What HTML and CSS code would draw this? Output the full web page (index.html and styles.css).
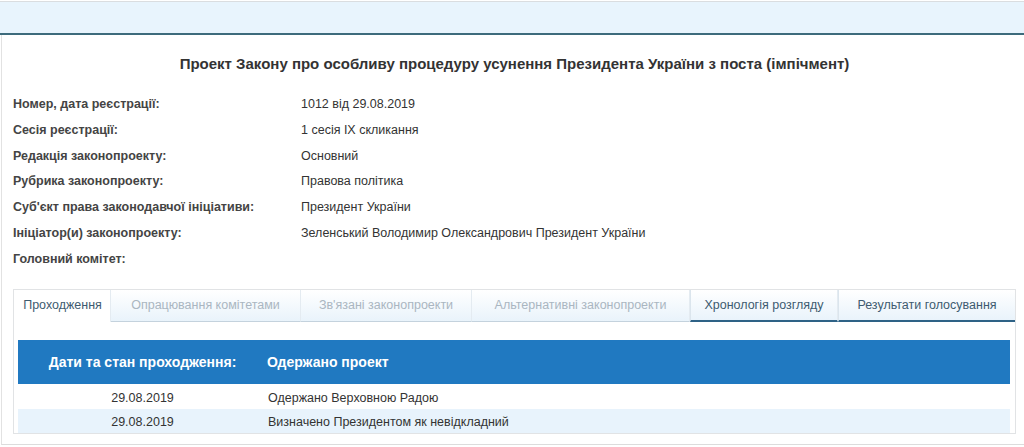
FILE: index.html
```html
<!DOCTYPE html>
<html lang="uk">
<head>
<meta charset="utf-8">
<title>Проект Закону</title>
<link rel="stylesheet" href="styles.css">
</head>
<body>
<div class="topbar"></div>
<div class="page">
  <h1 class="title">Проект Закону про особливу процедуру усунення Президента України з поста (імпічмент)</h1>
  <div class="info">
    <div class="label">Номер, дата реєстрації:</div><div class="value">1012 від 29.08.2019</div>
    <div class="label">Сесія реєстрації:</div><div class="value">1 сесія IX скликання</div>
    <div class="label">Редакція законопроекту:</div><div class="value">Основний</div>
    <div class="label">Рубрика законопроекту:</div><div class="value">Правова політика</div>
    <div class="label">Суб'єкт права законодавчої ініціативи:</div><div class="value">Президент України</div>
    <div class="label">Ініціатор(и) законопроекту:</div><div class="value">Зеленський Володимир Олександрович Президент України</div>
    <div class="label">Головний комітет:</div><div class="value"></div>
  </div>
  <div class="tabbox">
    <div class="tabs">
      <div class="tab active">Проходження</div>
      <div class="tab disabled">Опрацювання комітетами</div>
      <div class="tab disabled">Зв'язані законопроекти</div>
      <div class="tab disabled">Альтернативні законопроекти</div>
      <div class="tab enabled">Хронологія розгляду</div>
      <div class="tab enabled last">Результати голосування</div>
    </div>
    <div class="panel">
      <div class="thead">
        <div class="c1">Дати та стан проходження:</div>
        <div class="c2">Одержано проект</div>
      </div>
      <div class="row">
        <div class="c1">29.08.2019</div>
        <div class="c2">Одержано Верховною Радою</div>
      </div>
      <div class="row alt">
        <div class="c1">29.08.2019</div>
        <div class="c2">Визначено Президентом як невідкладний</div>
      </div>
    </div>
  </div>
</div>
</body>
</html>
```
FILE: styles.css
```css
html, body {
  margin: 0;
  padding: 0;
  background: #fff;
  font-family: "Liberation Sans", Arial, sans-serif;
  color: #333;
}
.topbar {
  margin-top: 1px;
  height: 31px;
  background: #e8f4fd;
  border-top: 1px solid #dadde0;
  border-bottom: 2px solid #3d6b7c;
}
.page {
  margin-left: 1px;
  border-left: 1px solid #e2e2e2;
  border-bottom: 1px solid #dcdcdc;
  height: 410px;
  box-sizing: border-box;
  padding: 0 8px 0 11px;
}
.title {
  margin: 0;
  padding-top: 20px;
  height: 39px;
  font-size: 15px;
  font-weight: bold;
  text-align: center;
  color: #333;
  line-height: 18px;
}
.info {
  display: grid;
  grid-template-columns: 288px 1fr;
  grid-auto-rows: 25.8px;
  font-size: 12.5px;
  line-height: 16px;
  margin-top: 2px;
}
.label {
  font-weight: bold;
  color: #444;
  font-size: 12.5px;
}
.value {
  color: #333;
}
.tabbox {
  margin-top: 12px;
  border: 1px solid #e1e3e5;
  width: 1003px;
  box-sizing: border-box;
}
.tabs {
  display: grid;
  grid-template-columns: 97px 190px 171px 218px 148px 1fr;
  height: 32px;
}
.tab {
  font-size: 12.5px;
  text-align: center;
  line-height: 30px;
  box-sizing: border-box;
  background: linear-gradient(#ffffff, #e9f3fb);
  border-right: 1px solid #e4ebf1;
  border-bottom: 1px solid #c4d2dd;
  color: #aab6c1;
}
.tab.active {
  background: #fff;
  border-bottom: none;
  color: #3e5b70;
  padding-left: 1px;
}
.tab.enabled {
  color: #3e5b70;
  border-bottom: 2px solid #2e6286;
  border-left: 1px solid #dbe5ed;
}
.tab.last {
  border-right: none;
}
.panel {
  padding: 18px 5px 0 4px;
}
.thead {
  display: flex;
  align-items: center;
  height: 44px;
  margin-bottom: 1px;
  background: #2079c1;
  color: #fff;
  font-size: 14px;
  font-weight: bold;
}
.c1 {
  width: 249px;
  text-align: center;
}
.c2 {
  flex: 1;
  padding-left: 0;
}
.row .c2 {
  padding-left: 1px;
}
.row {
  display: flex;
  align-items: center;
  height: 24px;
  box-sizing: border-box;
  padding-top: 3px;
  font-size: 12.5px;
  color: #333;
}
.row.alt {
  background: #e8f3fc;
}
```
